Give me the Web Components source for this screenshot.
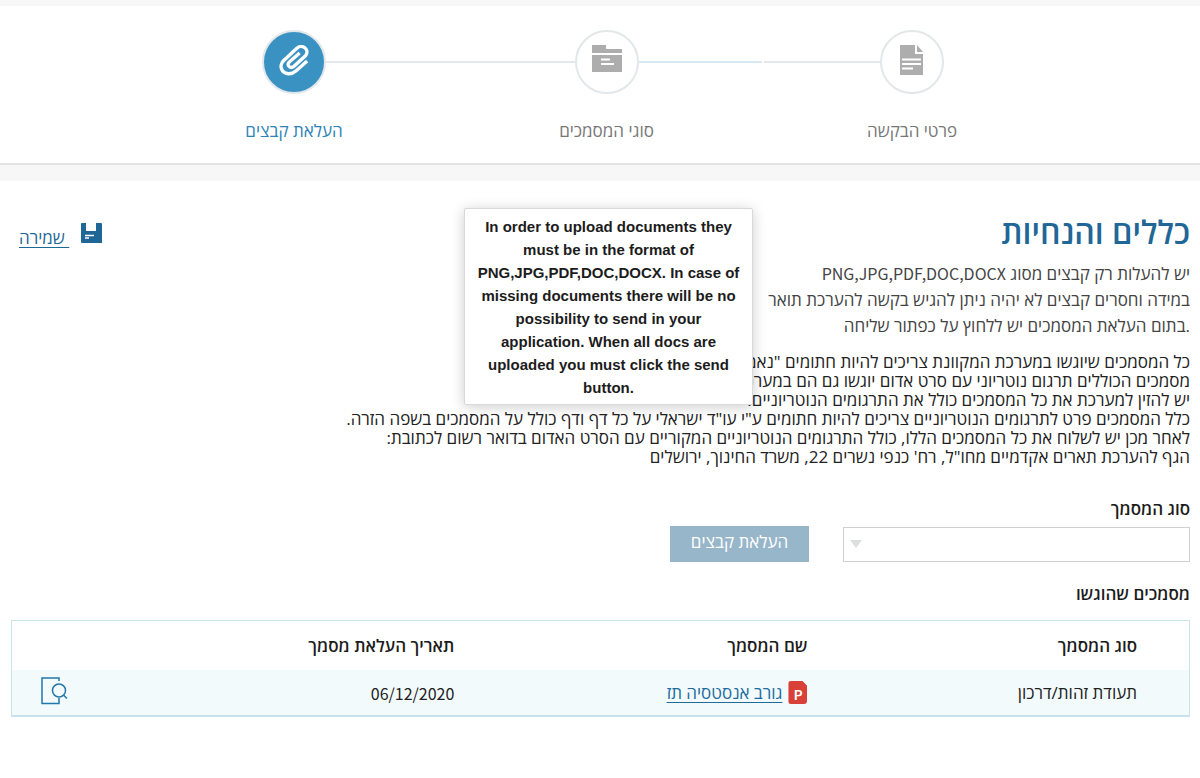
<!DOCTYPE html>
<html lang="he" dir="rtl">
<head>
<meta charset="utf-8">
<title>העלאת קבצים</title>
<style>
body { margin: 0; background: #fff; color: #222; font: 18px/24px "Open Sans", "Noto Sans", sans-serif; }
</style>
</head>
<body>
<upload-page></upload-page>
<script>
const define = (name, html) => customElements.define(name, class extends HTMLElement {
  constructor() {
    super();
    const t = document.createElement('template');
    t.innerHTML = html;
    this.attachShadow({ mode: 'open' }).append(t.content.cloneNode(true));
  }
});

define('wizard-step', `
<style>
  :host { display: flex; flex-direction: column; align-items: center; gap: 25px; width: 100px; color: #777; --disc: #fff; --icon: #adadad; }
  :host([current]) { color: #2b84b7; --disc: #3a92c2; --icon: #fff; }
  .disc { box-sizing: border-box; width: 64px; height: 64px; border: 2px solid #e2e7ea; border-radius: 50%; background: var(--disc); color: var(--icon); display: grid; place-items: center; }
  .label { font-size: 17px; line-height: 24px; white-space: nowrap; }
</style>
<div class="disc"><slot name="icon"></slot></div>
<div class="label"><slot></slot></div>`);

define('wizard-steps', `
<style>
  :host { display: flex; align-items: flex-start; padding: 24px 238px 20px 244px; border-top: 6px solid #f7f7f7; border-bottom: 2px solid #e3e3e3; background: #fff; }
  .line { height: 2px; margin: 31px -18px 0; background: #e4e7e9; }
  .first { flex: 206; background: linear-gradient(to left, #e4e7e9 48%, #fff 48%, #fff 49%, #d6e8f2 49%); }
  .second { flex: 212; }
  svg { display: block; }
</style>
<wizard-step>
  <svg slot="icon" width="24" height="34" viewBox="0 0 24 34"><path fill="currentColor" d="M0 0H15V9H23V30H0ZM17 0L23 7H17Z"/><path stroke="#fff" stroke-width="2.200" d="M2 14.500H21M2 19H21M2 23.500H13"/></svg>
  פרטי הבקשה
</wizard-step>
<div class="line first"></div>
<wizard-step>
  <svg slot="icon" width="30" height="36" viewBox="0 0 30 36"><path fill="currentColor" d="M0 1H14V5H30V9H0ZM0 11H30V28H0Z"/><path stroke="#fff" stroke-width="2.200" d="M9 15.500H18M9 20H22"/></svg>
  סוגי המסמכים
</wizard-step>
<div class="line second"></div>
<wizard-step current>
  <svg slot="icon" width="32" height="34" viewBox="0 1 34 36"><path fill="none" stroke="currentColor" stroke-width="3.600" stroke-linejoin="round" d="M31 18L19 28.500C14 33 7 32 4.500 28C2 24 3.500 19.500 7 16.500L20 4.500C25-.5 34 5 29.500 12L17 23.500C13 27 8.500 22 12 19L23 9.500"/></svg>
  העלאת קבצים
</wizard-step>`);

define('save-link', `
<style>
  :host { display: flex; align-items: center; gap: 12px; }
  a { color: #1f6797; font-size: 17px; line-height: 24px; margin-top: 10px; text-decoration: underline; text-underline-offset: 3px; white-space: pre; }
  svg { display: block; }
</style>
<svg width="21" height="21" viewBox="0 0 21 21"><path fill="#1f6797" d="M0 1Q0 0 1 0H5V8H15V0H20Q21 0 21 1V20H1Q0 20 0 19Z"/><path stroke="#fff" stroke-width="1.500" d="M4 12.500H13M4 15H8"/></svg>
<a href="#save"><slot></slot></a>`);

define('info-tip', `
<style>
  :host { display: block; box-sizing: border-box; width: 289px; padding: 6px 10px 5px; border: 1px solid #d9d9d9; border-radius: 2px; background: #fff; box-shadow: 0 2px 14px rgba(0,0,0,.2); direction: ltr; text-align: center; color: #1c1c1c; font: bold 15px/23px "Liberation Sans", Arial, sans-serif; }
</style>
<slot></slot>`);

define('rules-section', `
<style>
  :host { display: block; position: relative; }
  header { display: flex; justify-content: space-between; align-items: flex-start; padding-top: 29px; }
  h1 { margin: 0; color: #1f6797; font-size: 32px; line-height: 44px; font-weight: 600; }
  save-link { margin: 6px 0 0 8px; }
  p { margin: 0; }
  .intro { margin-top: 7px; color: #444; font-size: 17px; line-height: 26px; }
  .latin { font-family: "Noto Sans CJK SC", sans-serif; font-size: 16px; line-height: 1; }
  .details { margin-top: 13px; color: #222; font-size: 17px; line-height: 19px; white-space: nowrap; }
  info-tip { position: absolute; top: 27px; left: 453px; }
</style>
<header>
  <h1>כללים והנחיות</h1>
  <save-link> שמירה</save-link>
</header>
<p class="intro">יש להעלות רק קבצים מסוג <span class="latin">PNG,JPG,PDF,DOC,DOCX</span><br>במידה וחסרים קבצים לא יהיה ניתן להגיש בקשה להערכת תואר<br>.בתום העלאת המסמכים יש ללחוץ על כפתור שליחה</p>
<p class="details">כל המסמכים שיוגשו במערכת המקוונת צריכים להיות חתומים "נאמן למקור"<br>מסמכים הכוללים תרגום נוטריוני עם סרט אדום יוגשו גם הם במערכת<br>יש להזין למערכת את כל המסמכים כולל את התרגומים הנוטריוניים.<br>כלל המסמכים פרט לתרגומים הנוטריוניים צריכים להיות חתומים ע"י עו"ד ישראלי על כל דף ודף כולל על המסמכים בשפה הזרה.<br>לאחר מכן יש לשלוח את כל המסמכים הללו, כולל התרגומים הנוטריוניים המקוריים עם הסרט האדום בדואר רשום לכתובת:<br>הגף להערכת תארים אקדמיים מחו"ל, רח' כנפי נשרים 22, משרד החינוך, ירושלים</p>
<info-tip>In order to upload documents they must be in the format of PNG,JPG,PDF,DOC,DOCX. In case of missing documents there will be no possibility to send in your application. When all docs are uploaded you must click the send button.</info-tip>`);

define('upload-form', `
<style>
  :host { display: block; margin-top: 31px; }
  label { display: block; color: #1c1c1c; font-size: 17px; line-height: 24px; font-weight: 600; }
  .row { display: flex; align-items: flex-end; gap: 34px; margin-top: 5px; }
  .field { position: relative; width: 347px; }
  select { display: block; appearance: none; box-sizing: border-box; width: 100%; height: 35px; padding: 0 10px; border: 1px solid #cfd1d2; border-radius: 0; background: #fff; font: inherit; color: inherit; }
  .field svg { position: absolute; left: 7px; top: 13px; pointer-events: none; }
  button { width: 139px; height: 36px; padding: 0 0 4px; border: 0; background: #98b6ca; color: #fff; font: 17px/24px "Open Sans", "Noto Sans", sans-serif; }
</style>
<label for="kind">סוג המסמך</label>
<div class="row">
  <div class="field"><select id="kind"><option></option></select><svg width="12" height="8" viewBox="0 0 12 8"><path fill="#dcdedf" d="M0 0H12L6 8Z"/></svg></div>
  <button type="button">העלאת קבצים</button>
</div>`);

define('submitted-documents', `
<style>
  :host { display: block; margin-top: 20px; color: #222; }
  h2 { margin: 0; color: #1c1c1c; font-size: 17px; line-height: 24px; font-weight: 600; }
  table { width: 100%; margin-top: 14px; border: 1px solid #c9e2ec; border-bottom-width: 2px; border-collapse: separate; border-spacing: 0; table-layout: fixed; box-sizing: border-box; font-size: 17px; line-height: 24px; }
  th, td { box-sizing: border-box; padding: 0 52px 0 0; text-align: right; }
  th { height: 49px; font-weight: 600; color: #1c1c1c; }
  td { height: 45px; background: #f2fafc; }
  .c1 { width: 28%; } .c2, .c3 { width: 30%; }
  .c4 { padding: 0 0 4px 29px; text-align: left; }
  .latin { font-family: "Noto Sans CJK SC", sans-serif; font-size: 16px; }
  .file { display: flex; align-items: center; gap: 6px; }
  .file a { color: #1d6c9f; text-underline-offset: 3px; }
  .badge { display: grid; place-items: end center; width: 19px; height: 23px; background: #d94038; color: #fff; border-radius: 3px; clip-path: polygon(0 0, 14px 0, 100% 5px, 100% 100%, 0 100%); font: bold 14px/19px Lato, sans-serif; }
  svg { display: inline-block; vertical-align: middle; }
</style>
<h2>מסמכים שהוגשו</h2>
<table>
  <thead><tr><th class="c1">סוג המסמך</th><th class="c2">שם המסמך</th><th class="c3">תאריך העלאת מסמך</th><th class="c4"></th></tr></thead>
  <tbody><tr>
    <td>תעודת זהות/דרכון</td>
    <td><div class="file"><span class="badge">P</span><a href="#file">גורב אנסטסיה תז</a></div></td>
    <td class="latin">06/12/2020</td>
    <td class="c4"><a href="#preview" aria-label="תצוגה מקדימה"><svg width="27" height="28" viewBox="0 0 27 28"><g fill="none" stroke="#2577aa" stroke-width="1.500"><path d="M18 4V1H1V26.500H18V21"/><circle cx="18" cy="13.500" r="6.500"/><path d="M22.500 18L26 21.500"/></g></svg></a></td>
  </tr></tbody>
</table>`);

define('upload-page', `
<style>
  :host { display: block; }
  main { display: block; padding: 0 10px 40px 11px; border-top: 16px solid #f7f7f7; }
</style>
<wizard-steps></wizard-steps>
<main>
  <rules-section></rules-section>
  <upload-form></upload-form>
  <submitted-documents></submitted-documents>
</main>`);
</script>
</body>
</html>
